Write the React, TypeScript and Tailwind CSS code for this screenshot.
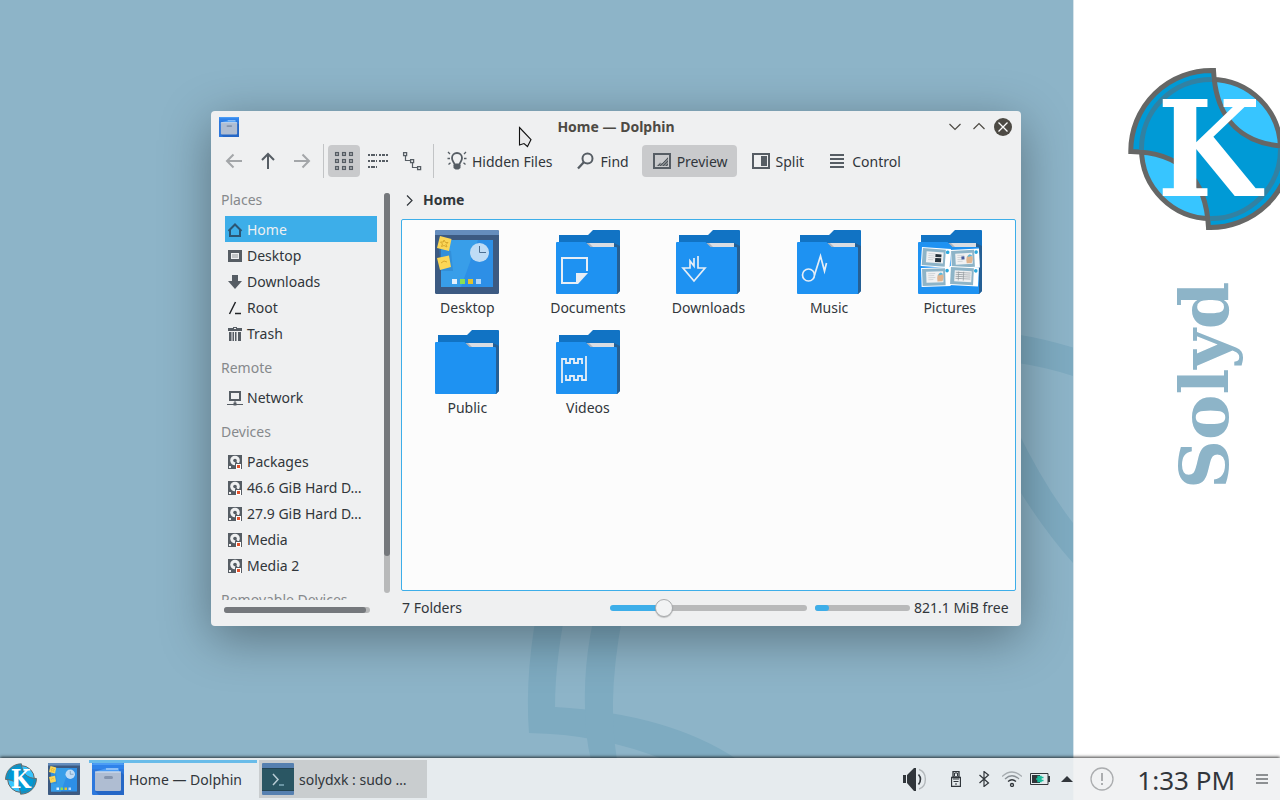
import type { ReactNode } from "react";

/* ---------- logo and wallpaper ---------- */

function Logo({ className }: { className: string }) {
  return (
    <svg viewBox="0 0 166 166" className={className} aria-hidden="true">
      <circle cx="83" cy="83" r="69.5" fill="#37c5ff" stroke="#666766" strokeWidth="5" />
      <path
        d="M2.8 85.500A80.500 80.500 0 0 1 85.500 4.500C88 55 115 80 163.200 80.500A80.500 80.500 0 0 1 80.500 161.500C78 111 51 86 2.800 85.500Z"
        fill="#009ad6"
        stroke="#666766"
        strokeWidth="5"
      />
      <path d="M13.500 84A69.500 69.500 0 0 1 84 13.500M152.500 82A69.500 69.500 0 0 1 82 152.500" fill="none" stroke="#3281a2" strokeWidth="5" />
      <text
        x="81"
        y="130"
        textAnchor="middle"
        fill="#fff"
        fontSize="132"
        fontWeight="700"
        fontFamily="'DejaVu Serif Condensed', 'DejaVu Serif', serif"
      >
        K
      </text>
    </svg>
  );
}

function Wallpaper() {
  return (
    <div className="absolute inset-0 flex overflow-hidden bg-white">
      <div className="relative flex-1 overflow-hidden bg-[#8db4c8]">
        <svg viewBox="0 0 1073 800" className="absolute top-0 left-0 h-[800px] w-[1073px]" fill="#7eabc1" aria-hidden="true">
          <path d="M541 590Q524 670 529 733Q600 734 665 760H738Q670 714 555 707Q555 655 570 590Z" />
          <path d="M601 590Q583 650 585 710Q585 735 591 760H617Q605 690 628 590Z" />
          <path d="M1000 332Q1036 336 1073 347.500V376Q1036 364 1000 361Z" />
          <path d="M1010 415Q1040 480 1073 523V563Q1040 526 1010 475Z" />
        </svg>
      </div>
      <div className="relative w-[207px] shrink-0 border-l border-[#d5e3ea] bg-white">
        <Logo className="absolute top-[66px] left-[54px] h-[166px] w-[166px]" />
        <div className="absolute top-[259px] left-[92px] flex h-[230px] w-[76px] rotate-180 items-center justify-start font-['DejaVu_Serif'] text-[68px] leading-[76px] font-bold text-[#8db4c8] [writing-mode:vertical-rl]">
          Solyd
        </div>
      </div>
    </div>
  );
}

/* ---------- app icons ---------- */

function DesktopIcon({ className }: { className: string }) {
  return (
    <svg viewBox="0 0 64 64" className={className} aria-hidden="true">
      <rect width="64" height="64" rx="1.500" fill="#3c5a82" />
      <path d="M0 5V1.500Q0 0 1.500 0H62.500Q64 0 64 1.500V5Z" fill="#658dbd" />
      <path d="M6 10H58V57H6Z" fill="#2d8fe6" />
      <path d="M6 10H43L26 57H6Z" fill="#389ee9" />
      <path d="M4 18L16 21L18 41H6Z" fill="#2b7fc9" opacity=".5" />
      <path d="M5 6L16.500 9L14 21L2 18Z" fill="#fbd757" />
      <path d="M9 10L10.500 12.500H13L11 14.500L12 17L9 15.500L6.500 16.500L7.500 14L5.500 12L8.300 12Z" fill="none" stroke="#d8a92e" />
      <path d="M2 28L14 25.500L16 37L5 40Z" fill="#fbd757" />
      <path d="M6 33L9 31L12 32" fill="none" stroke="#d8a92e" />
      <circle cx="44.500" cy="22.500" r="9.500" fill="#bfdcf5" />
      <path d="M44.500 16V22.500H51" fill="none" stroke="#4d6f91" />
      <path d="M17 49H22V54H17Z" fill="#e3f1fc" />
      <path d="M25 49H30V54H25Z" fill="#8be053" />
      <path d="M33 49H38V54H33Z" fill="#e3c32f" />
      <path d="M41 49H46V54H41Z" fill="#b3d7f8" />
    </svg>
  );
}

function Folder({ children }: { children?: ReactNode }) {
  return (
    <svg viewBox="0 0 64 64" className="h-16 w-16" aria-hidden="true">
      <path d="M3 5H32L37 0H63Q64 0 64 1V61L61 64L30 30H3Z" fill="#1173c4" />
      <path d="M58 13L64 16V61L61 64H58Z" fill="#255f94" />
      <path d="M29 13H58V18H34Z" fill="#d9dde3" />
      <path d="M29 13L34 18H38L33 13Z" fill="#aeb4bd" />
      <path d="M1 12H29.500L34.500 17H60Q61 17 61 18V63Q61 64 60 64H1Q0 64 0 63V13Q0 12 1 12Z" fill="#1e92f2" />
      {children}
    </svg>
  );
}

const glyph = { fill: "none", stroke: "#e6eef6", strokeWidth: 2 };

function PicturesArt() {
  const cards = ["translate(4 17) rotate(4)", "translate(32 20) rotate(-3)", "translate(3 38) rotate(-2)", "translate(32 36) rotate(3)"];
  return (
    <>
      {cards.map((t, i) => (
        <g key={t} transform={t}>
          <rect width="29" height="19" fill="#fff" />
          <rect x="1" y="1" width="23" height="17" fill="#8db4c8" />
          <rect x="5" y="4" width="17" height="11" fill="#f0f1f2" />
          <path d="M7 6H14M7 8H13M7 10H14M7 12H12" stroke="#d0d5d8" />
          <circle cx="26" cy="3.500" r="1.800" fill="#2ba9dd" />
          {i === 0 && <path d="M14 6H20V9H14ZM14 10H20V14H14Z" fill="#26323a" />}
          {i === 1 && <path d="M11 7H14V10H11Z" fill="#455a9b" />}
          {i === 3 && <path d="M6 6H21M6 8H21M6 10H21M6 12H21M9 5V14M14 5V14" stroke="#8b9297" strokeWidth=".6" />}
          {(i === 1 || i === 2) && <path d="M16 14Q15 5 20 6Q24 8 21 14Z" fill="#dfb48f" />}
          {(i === 1 || i === 2) && <path d="M17 8Q19 3 22 7Z" fill="#58b8df" />}
        </g>
      ))}
    </>
  );
}

function CabinetIcon({ className }: { className: string }) {
  return (
    <svg viewBox="0 0 32 32" className={className} aria-hidden="true">
      <rect width="32" height="32" rx="1" fill="#2d78dd" />
      <path d="M0 0H32V6H0Z" fill="#2f83ea" />
      <path d="M3 28L7 32H32V12L29 9Z" fill="#2567c6" />
      <path d="M0 2Q0 0 2 0H30Q32 0 32 2Z" fill="#4b9cf5" />
      <path d="M5 8L15 5H27V10H5Z" fill="#4b9cf5" />
      <path d="M14 6H26" stroke="#cfe4fb" strokeWidth="1" />
      <path d="M3 10Q3 8.500 4.500 8.500H27.500Q29 8.500 29 10V26.500Q29 28 27.500 28H4.500Q3 28 3 26.500Z" fill="#afbdd2" />
      <path d="M3 9H29" stroke="#d6e4f5" />
      <rect x="12" y="13" width="9" height="3" rx="1.500" fill="#8494ad" />
    </svg>
  );
}

function TerminalIcon({ className }: { className: string }) {
  return (
    <svg viewBox="0 0 32 32" className={className} aria-hidden="true">
      <rect width="32" height="32" rx="1" fill="#5680b0" />
      <path d="M0 5H32V28H0Z" fill="#2a5663" />
      <path d="M0 5.500H32M0 27.500H32" stroke="#244553" />
      <path d="M11 11L16 16.500L11 22" fill="none" stroke="#b8cbd4" strokeWidth="1.500" />
      <path d="M17 22H22" stroke="#7faab8" strokeWidth="1.500" />
    </svg>
  );
}

/* ---------- line icons ---------- */

function Line({ children }: { children: ReactNode }) {
  return (
    <svg viewBox="0 0 22 22" className="h-[22px] w-[22px] shrink-0" fill="none" stroke="#565d64" strokeWidth="2" aria-hidden="true">
      {children}
    </svg>
  );
}

function Tool({ label, active, children }: { label: string; active?: boolean; children: ReactNode }) {
  return (
    <button type="button" className={`flex h-8 items-center gap-1 rounded-sm px-[9px] ${active ? "bg-[#c9cacc]" : ""}`}>
      {children}
      <span className="pt-[2px]">{label}</span>
    </button>
  );
}

function IconTool({ label, active, children }: { label: string; active?: boolean; children: ReactNode }) {
  return (
    <button type="button" aria-label={label} className={`flex h-8 w-8 items-center justify-center rounded-sm ${active ? "bg-[#c9cacc]" : ""}`}>
      {children}
    </button>
  );
}

function Toolbar() {
  const dots = [2.6, 9.6, 16.6];
  return (
    <div className="flex h-9 items-center pl-[7px]">
      <div className="flex gap-[2px]">
        <IconTool label="Back">
          <Line>
            <path d="M19 11H4M10.500 4.500L4 11L10.500 17.500" stroke="#a3a6a9" />
          </Line>
        </IconTool>
        <IconTool label="Up">
          <Line>
            <path d="M11 19V4M5 10L11 4L17 10" />
          </Line>
        </IconTool>
        <IconTool label="Forward">
          <Line>
            <path d="M3 11H18M11.500 4.500L18 11L11.500 17.500" stroke="#a3a6a9" />
          </Line>
        </IconTool>
      </div>
      <div className="mr-1 ml-[5px] h-[34px] w-px bg-[#c2c4c6]" />
      <div className="flex gap-[2px]">
        <IconTool label="Icons" active>
          <Line>
            {dots.map((y) => dots.map((x) => <rect key={`${x}-${y}`} x={x} y={y} width="2.800" height="2.800" strokeWidth="1.300" />))}
          </Line>
        </IconTool>
        <IconTool label="Compact">
          <Line>
            <path d="M1 5H3M4 5H8M9 5H10M12 5H14M15 5H18M19 5H21M1 11H3M4 11H8M9 11H10M12 11H14M15 11H18M19 11H21M1 17H3M4 17H8M9 17H10" />
          </Line>
        </IconTool>
        <IconTool label="Tree">
          <Line>
            <path d="M4.500 6V10.500H9M11.500 13V17.500H16" strokeWidth="1.200" />
            <path d="M2.600 2.600H5.600V5.600H2.600ZM9.600 9.600H12.600V12.600H9.600ZM16.600 16.600H19.600V19.600H16.600Z" strokeWidth="1.300" />
          </Line>
        </IconTool>
      </div>
      <div className="mr-[3px] ml-[5px] h-[34px] w-px bg-[#c2c4c6]" />
      <div className="flex gap-1">
        <Tool label="Hidden Files">
          <Line>
            <path d="M8.500 14.500C8.500 12.500 6 11.500 6 8A5 5 0 0 1 16 8C16 11.500 13.500 12.500 13.500 14.500Z" strokeWidth="1.800" />
            <path d="M7.500 15H14.500V18L12.500 19.500H9.500L7.500 18Z" fill="#565d64" stroke="none" />
            <path d="M2 2L4 4M20 2L18 4M1.500 8.500H4M18 8.500H20.500M2.500 14.500L4.500 12.700M19.500 14.500L17.500 12.700" strokeWidth="1.300" />
          </Line>
        </Tool>
        <Tool label="Find">
          <Line>
            <circle cx="12.500" cy="8.500" r="5" />
            <path d="M9 12L3 18.500" strokeWidth="2.300" />
          </Line>
        </Tool>
        <Tool label="Preview" active>
          <Line>
            <rect x="3" y="4" width="16" height="14" />
            <path d="M5.500 16L9 12.500L11 13.500L17 7V16Z" fill="#82878b" stroke="none" />
            <path d="M7 16L9 14M9 16L17 8M12 16L17 11M15 16L17 14" stroke="#4f565c" strokeWidth="1" />
          </Line>
        </Tool>
        <Tool label="Split">
          <Line>
            <rect x="3" y="4" width="16" height="14" />
            <path d="M11 6H17V16H11Z" fill="#565d64" stroke="none" />
          </Line>
        </Tool>
        <Tool label="Control">
          <Line>
            <path d="M4 5H18M4 9H18M4 13H18M4 17H18" />
          </Line>
        </Tool>
      </div>
    </div>
  );
}

/* ---------- places ---------- */

function PlaceIcon({ kind }: { kind: string }) {
  const box = "h-4 w-4 shrink-0";
  if (kind === "home")
    return (
      <svg viewBox="0 0 16 16" className={box} fill="none" stroke="#2c5573" strokeWidth="2" aria-hidden="true">
        <path d="M1.500 9L8 2.500L14.500 9M3 8V14H13V8" />
      </svg>
    );
  if (kind === "desktop")
    return (
      <svg viewBox="0 0 16 16" className={box} aria-hidden="true">
        <path d="M1 2H15V14H1ZM4 5V11H12V5Z" fill="#565d64" fillRule="evenodd" />
        <path d="M4 5H12V11H4Z" fill="#eff0f1" />
        <path d="M5 6H11V10H5Z" fill="#c2c5c7" />
      </svg>
    );
  if (kind === "downloads")
    return (
      <svg viewBox="0 0 16 16" className={box} fill="#565d64" aria-hidden="true">
        <path d="M5 1H11V7H15L8 15L1 7H5Z" />
      </svg>
    );
  if (kind === "root")
    return (
      <svg viewBox="0 0 16 16" className={box} fill="none" stroke="#232629" strokeWidth="1.500" aria-hidden="true">
        <path d="M2.500 14L8.500 2M8 13.500H14" />
      </svg>
    );
  if (kind === "trash")
    return (
      <svg viewBox="0 0 16 16" className={box} fill="#565d64" aria-hidden="true">
        <path d="M1 2H6V1H10V2H15V5H1ZM7 2V3H9V2ZM2 6H4.500V15H2ZM5.500 6H7V15H5.500ZM8 6H9.500V15H8ZM11 6H14V15H11Z" fillRule="evenodd" />
      </svg>
    );
  if (kind === "network")
    return (
      <svg viewBox="0 0 16 16" className={box} fill="none" stroke="#565d64" aria-hidden="true">
        <path d="M3 2H13V10H3Z" strokeWidth="2" />
        <path d="M8 11V14M0 14.500H16" />
        <path d="M6.500 14H9.500" strokeWidth="3" />
      </svg>
    );
  return (
    <svg viewBox="0 0 16 16" className={box} aria-hidden="true">
      <path d="M1 1H15V15H1Z" fill="#565d64" />
      <circle cx="8" cy="6.500" r="4.800" fill="#eff0f1" />
      <circle cx="8" cy="6.500" r="1.800" fill="#565d64" />
      <path d="M8 7L12 12" stroke="#565d64" strokeWidth="1.500" />
      <path d="M2 12H4V14H2Z" fill="#eff0f1" />
      <path d="M8 9H15V15H8Z" fill="#565d64" />
      <path d="M9 10H14V15H9Z" fill="#fff" />
      <path d="M10 11H13V14H10Z" fill="#e0522d" />
    </svg>
  );
}

const places = [
  {
    title: "Places",
    items: [
      ["home", "Home"],
      ["desktop", "Desktop"],
      ["downloads", "Downloads"],
      ["root", "Root"],
      ["trash", "Trash"],
    ],
  },
  { title: "Remote", items: [["network", "Network"]] },
  {
    title: "Devices",
    items: [
      ["disk", "Packages"],
      ["disk", "46.6 GiB Hard D…"],
      ["disk", "27.9 GiB Hard D…"],
      ["disk", "Media"],
      ["disk", "Media 2"],
    ],
  },
  { title: "Removable Devices", items: [] },
];

function Places() {
  return (
    <nav aria-label="Places" className="flex w-[190px] shrink-0 flex-col">
      <div className="flex min-h-0 flex-1">
        <div className="h-[421px] w-[166px] overflow-hidden">
          {places.map((group, i) => (
            <section key={group.title}>
              <h2 className={`pb-[6px] pl-[10px] leading-5 text-[#86898c] ${i === 0 ? "pt-[11px]" : "pt-3"}`}>{group.title}</h2>
              <ul className="pl-[14px]">
                {group.items.map(([kind, name]) => (
                  <li key={name}>
                    <a
                      href="#place"
                      className={`flex h-[26px] items-center gap-1 pl-[2px] pt-px ${name === "Home" ? "bg-[#3daee9] text-[#eff0f1]" : ""}`}
                    >
                      <PlaceIcon kind={kind} />
                      <span className="pt-px whitespace-nowrap">{name}</span>
                    </a>
                  </li>
                ))}
              </ul>
            </section>
          ))}
        </div>
        <div className="mt-[14px] ml-[7px] h-[400px] w-[6px] rounded-full bg-[#b8b9ba]">
          <div className="h-[363px] rounded-full bg-[#75787c]" />
        </div>
      </div>
      <div className="mb-[13px] ml-[13px] h-[6px] w-[146px] rounded-full bg-[#b8b9ba]">
        <div className="h-full w-[142px] rounded-full bg-[#75787c]" />
      </div>
    </nav>
  );
}

/* ---------- folder view ---------- */

const folders: { name: string; icon: ReactNode }[] = [
  { name: "Desktop", icon: <DesktopIcon className="h-16 w-16" /> },
  {
    name: "Documents",
    icon: (
      <Folder>
        <path d="M31 41V28H6V53H21" {...glyph} />
        <path d="M20 43H32L22 54H20Z" fill="#e6eef6" />
      </Folder>
    ),
  },
  {
    name: "Downloads",
    icon: (
      <Folder>
        <path d="M22 26V38H29L18 51L7 38H14V31L18 36V28" {...glyph} strokeWidth={1.7} />
      </Folder>
    ),
  },
  {
    name: "Music",
    icon: (
      <Folder>
        <circle cx="11.500" cy="45" r="6" {...glyph} strokeWidth={1.7} />
        <path d="M17.500 45L23.500 26L27.500 41L29.500 33" {...glyph} strokeWidth={1.7} />
      </Folder>
    ),
  },
  {
    name: "Pictures",
    icon: (
      <Folder>
        <PicturesArt />
      </Folder>
    ),
  },
  { name: "Public", icon: <Folder /> },
  {
    name: "Videos",
    icon: (
      <Folder>
        <path d="M6 53V29H10V33H14V29H18V33H22V29H26V33H27M30 26V50H26V46H22V50H18V46H14V50H10V46H9" {...glyph} strokeWidth={1.8} />
      </Folder>
    ),
  },
];

function FileManager() {
  return (
    <section
      aria-label="Home — Dolphin"
      className="absolute top-[111px] left-[211px] flex w-[810px] flex-col rounded-sm bg-[#eff0f1] shadow-[0_12px_50px_rgba(0,0,0,0.36)]"
    >
      <header className="grid h-8 grid-cols-3 items-center px-2">
        <CabinetIcon className="h-5 w-5" />
        <h1 className="text-center font-bold text-[#4d4a44]">Home — Dolphin</h1>
        <div className="flex items-center justify-end gap-1">
          <button type="button" aria-label="Minimize" className="flex h-5 w-5 items-center justify-center">
            <svg viewBox="0 0 12 12" className="h-3 w-3" fill="none" stroke="#4d4a44" strokeWidth="1.200">
              <path d="M.5 3L6 8.500L11.500 3" />
            </svg>
          </button>
          <button type="button" aria-label="Maximize" className="flex h-5 w-5 items-center justify-center">
            <svg viewBox="0 0 12 12" className="h-3 w-3" fill="none" stroke="#4d4a44" strokeWidth="1.200">
              <path d="M.5 8L6 2.500L11.500 8" />
            </svg>
          </button>
          <button type="button" aria-label="Close" className="flex h-5 w-5 items-center justify-center">
            <svg viewBox="0 0 18 18" className="h-[18px] w-[18px]">
              <circle cx="9" cy="9" r="9" fill="#4d4a44" />
              <path d="M4.500 4.500L13.500 13.500M13.500 4.500L4.500 13.500" stroke="#fcfcfc" strokeWidth="1.300" />
            </svg>
          </button>
        </div>
      </header>
      <Toolbar />
      <div className="flex">
        <Places />
        <main className="flex min-w-0 flex-1 flex-col pr-[5px]">
          <div className="flex h-10 items-center gap-2 pt-[2px] pl-[3px]">
            <svg viewBox="0 0 11 11" className="h-[11px] w-[11px]" fill="none" stroke="#31363b" strokeWidth="1.200" aria-hidden="true">
              <path d="M3 .5L8 5.500L3 10.500" />
            </svg>
            <a href="#home" className="font-bold">
              Home
            </a>
          </div>
          <ul className="grid h-[372px] grid-cols-5 content-start rounded-xs border border-[#3daee9] bg-[#fcfcfc] px-[5px] pt-[10px]">
            {folders.map((f) => (
              <li key={f.name} className="flex h-[100px] flex-col items-center gap-1">
                {f.icon}
                <span className="leading-5">{f.name}</span>
              </li>
            ))}
          </ul>
          <footer className="flex h-[35px] items-center pr-[3px] pb-[2px] pl-px">
            <span className="flex-1">7 Folders</span>
            <input
              type="range"
              aria-label="Icon size"
              min="0"
              max="100"
              defaultValue="25"
              className="mr-2 h-[6px] w-[197px] appearance-none rounded-full bg-linear-to-r from-[#3daee9] from-27% to-[#b8b9ba] to-27% [&::-webkit-slider-thumb]:h-[18px] [&::-webkit-slider-thumb]:w-[18px] [&::-webkit-slider-thumb]:appearance-none [&::-webkit-slider-thumb]:rounded-full [&::-webkit-slider-thumb]:border [&::-webkit-slider-thumb]:border-[#a9abad] [&::-webkit-slider-thumb]:bg-[#f2f3f4] [&::-webkit-slider-thumb]:shadow-[0_1px_1px_rgba(0,0,0,0.2)]"
            />
            <div className="h-[6px] w-[95px] rounded-full bg-[#b8b9ba]">
              <div className="h-full w-[14px] rounded-full bg-[#3daee9]" />
            </div>
            <span className="w-[103px] pl-1 whitespace-nowrap">821.1 MiB free</span>
          </footer>
        </main>
      </div>
    </section>
  );
}

/* ---------- taskbar ---------- */

function Taskbar() {
  return (
    <footer className="relative flex h-[42px] shrink-0 items-center bg-[#eff1f2]/90 shadow-[0_-1px_3px_rgba(0,0,0,0.75)]">
      <div className="flex min-w-0 flex-1 items-center pl-[5px]">
        <button type="button" aria-label="Applications" className="mr-[11px]">
          <Logo className="h-8 w-8" />
        </button>
        <button type="button" aria-label="Show desktop" className="mr-[9px]">
          <DesktopIcon className="h-8 w-8" />
        </button>
        <button type="button" className="mr-[2px] flex h-[38px] w-[168px] items-center gap-[5px] border-t-3 border-[#69bce9] px-[3px] pb-[3px]">
          <CabinetIcon className="h-8 w-8 shrink-0" />
          <span className="truncate pt-[2px]">Home — Dolphin</span>
        </button>
        <button type="button" className="flex h-[38px] w-[168px] items-center gap-[5px] bg-[#c9cdcf] px-[3px]">
          <TerminalIcon className="h-8 w-8 shrink-0" />
          <span className="truncate pt-[2px]">solydxk : sudo …</span>
        </button>
      </div>
      <div className="flex items-center pr-3">
        <svg viewBox="0 0 24 24" className="mr-6 h-6 w-6" role="img" aria-label="Volume">
          <path d="M0 8H3V16H0ZM4 8L11 1H13V24H11L4 16Z" fill="#31363b" />
          <path d="M15.500 7.500Q19.500 12 15.500 17.500" fill="none" stroke="#31363b" strokeWidth="1.600" />
          <path d="M16 2.500C24.500 5 24.500 19.500 16 22" fill="none" stroke="#b3b8bb" strokeWidth="1.400" />
        </svg>
        <svg viewBox="0 0 10 16" className="mr-[17px] h-4 w-[10px]" fill="none" stroke="#31363b" role="img" aria-label="USB">
          <path d="M2 .5H8V6H2ZM.5 6.500H9.500V15.500H.5Z" strokeWidth="1.300" />
          <path d="M3.500 2V5M6.500 2V5M5 .5V3M2 8H8M2.500 10.500H7.500M4 13H6" />
        </svg>
        <svg viewBox="0 0 12 16" className="mr-3 h-4 w-3" fill="none" stroke="#31363b" strokeWidth="1.200" role="img" aria-label="Bluetooth">
          <path d="M1.500 4L10.500 12L6 15.500V.5L10.500 4L1.500 12" />
        </svg>
        <svg viewBox="0 0 20 16" className="mr-2 h-4 w-5" fill="none" strokeWidth="1.300" role="img" aria-label="Wireless">
          <path d="M0 5.500Q10 -3.500 20 5.500" stroke="#a6acb0" />
          <path d="M3 8Q10 1.500 17 8" stroke="#8b9196" />
          <path d="M6 10.500Q10 7 14 10.500" stroke="#31363b" />
          <circle cx="10" cy="14" r="1.500" stroke="#31363b" />
        </svg>
        <svg viewBox="0 0 20 12" className="mr-[11px] h-3 w-5" role="img" aria-label="Battery">
          <path d="M.5.500H18V11.500H.5Z" fill="none" stroke="#31363b" />
          <path d="M18 3H20V9H18ZM2 2H10V10H2Z" fill="#31363b" />
          <path d="M6 6H8M8 3.500H11V8.500H8ZM11 4.500H13.500M11 7.500H13.500" stroke="#1abc9c" strokeWidth="1.400" fill="#1abc9c" />
        </svg>
        <svg viewBox="0 0 12 6" className="mr-[17px] h-[6px] w-3" role="img" aria-label="Show hidden icons">
          <path d="M0 6L6 0L12 6Z" fill="#31363b" />
        </svg>
        <svg viewBox="0 0 24 24" className="mr-[23px] h-6 w-6" fill="none" stroke="#abadaf" role="img" aria-label="Notifications">
          <circle cx="12" cy="12" r="11" strokeWidth="1.300" />
          <path d="M12 6V14M12 16V18" strokeWidth="2" />
        </svg>
        <time className="mr-[21px] pt-[2px] text-[26px] leading-8">1:33 PM</time>
        <button type="button" aria-label="Panel options">
          <svg viewBox="0 0 12 12" className="h-3 w-3" stroke="#8d9092" strokeWidth="2">
            <path d="M0 2H12M0 6H12M0 10H12" />
          </svg>
        </button>
      </div>
    </footer>
  );
}

export default function App() {
  return (
    <div className="relative flex h-screen flex-col overflow-hidden font-['Noto_Sans',sans-serif] text-sm text-[#31363b]">
      <Wallpaper />
      <div className="relative flex-1">
        <FileManager />
        <svg viewBox="0 0 14 22" className="absolute top-[126px] left-[518px] h-[22px] w-[14px]" aria-hidden="true">
          <path d="M1.500 1.500L13 13.500L9.500 20.500L6 17.500L1.500 19Z" fill="#e9e9ea" stroke="#111" strokeWidth="1.100" />
        </svg>
      </div>
      <Taskbar />
    </div>
  );
}
